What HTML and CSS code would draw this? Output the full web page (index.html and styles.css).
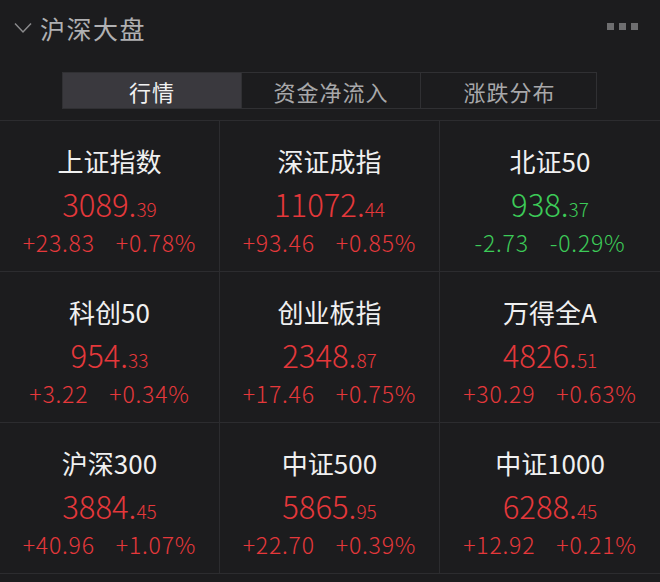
FILE: index.html
```html
<!DOCTYPE html>
<html lang="zh-CN">
<head>
<meta charset="utf-8">
<link rel="stylesheet" href="styles.css">
</head>
<body>
<div class="panel">
  <header class="head">
    <div class="title-wrap">
      <svg class="chev" width="18" height="12" viewBox="0 0 18 12"><path d="M1 1.5 L9 10 L17 1.5" fill="none" stroke="#8a8a8c" stroke-width="1.5"/></svg>
      <span class="title">沪深大盘</span>
    </div>
    <div class="dots"><i></i><i></i><i></i></div>
  </header>
  <nav class="tabs">
    <div class="tab active">行情</div>
    <div class="tab">资金净流入</div>
    <div class="tab">涨跌分布</div>
  </nav>
  <section class="grid">
    <div class="cell"><div class="name">上证指数</div><div class="price up"><span class="int">3089.</span><span class="dec">39</span></div><div class="chg up"><span>+23.83</span><span>+0.78%</span></div></div>
    <div class="cell"><div class="name">深证成指</div><div class="price up"><span class="int">11072.</span><span class="dec">44</span></div><div class="chg up"><span>+93.46</span><span>+0.85%</span></div></div>
    <div class="cell"><div class="name">北证50</div><div class="price down"><span class="int">938.</span><span class="dec">37</span></div><div class="chg down"><span>-2.73</span><span>-0.29%</span></div></div>
    <div class="cell"><div class="name">科创50</div><div class="price up"><span class="int">954.</span><span class="dec">33</span></div><div class="chg up"><span>+3.22</span><span>+0.34%</span></div></div>
    <div class="cell"><div class="name">创业板指</div><div class="price up"><span class="int">2348.</span><span class="dec">87</span></div><div class="chg up"><span>+17.46</span><span>+0.75%</span></div></div>
    <div class="cell"><div class="name">万得全A</div><div class="price up"><span class="int">4826.</span><span class="dec">51</span></div><div class="chg up"><span>+30.29</span><span>+0.63%</span></div></div>
    <div class="cell"><div class="name">沪深300</div><div class="price up"><span class="int">3884.</span><span class="dec">45</span></div><div class="chg up"><span>+40.96</span><span>+1.07%</span></div></div>
    <div class="cell"><div class="name">中证500</div><div class="price up"><span class="int">5865.</span><span class="dec">95</span></div><div class="chg up"><span>+22.70</span><span>+0.39%</span></div></div>
    <div class="cell"><div class="name">中证1000</div><div class="price up"><span class="int">6288.</span><span class="dec">45</span></div><div class="chg up"><span>+12.92</span><span>+0.21%</span></div></div>
  </section>
</div>
</body>
</html>
```

FILE: styles.css
```css
* { box-sizing: border-box; }
html, body { margin: 0; padding: 0; }
body {
  background: #1c1c1e;
  font-family: "Noto Sans CJK SC", "Noto Sans", sans-serif;
  font-weight: 400;
  width: 660px;
  height: 582px;
  overflow: hidden;
}
.panel { width: 660px; }
.head {
  height: 56px;
  display: flex;
  align-items: center;
  justify-content: space-between;
  padding: 0 22px 0 14px;
}
.title-wrap { display: flex; align-items: center; gap: 8px; }
.chev { display: block; }
.title {
  font-size: 25px;
  line-height: 32px;
  color: #b0b0b2;
  letter-spacing: 1.5px;
}
.dots { display: flex; gap: 5px; margin-top: -4px; }
.dots i { display: block; width: 7px; height: 7px; background: #6e6e70; }
.tabs {
  margin: 16px 0 0 62px;
  width: 535px;
  height: 37px;
  display: grid;
  grid-template-columns: 178px 179px 178px;
  border: 1px solid #303033;
}
.tab {
  display: flex;
  align-items: center;
  justify-content: center;
  font-size: 22px;
  color: #a8a8aa;
  border-left: 1px solid #303033;
  letter-spacing: 1px;
}
.tab:first-child { border-left: none; }
.tab.active { background: #3a393e; color: #f2f2f2; }
.grid {
  margin-top: 11px;
  display: grid;
  grid-template-columns: 220px 220px 220px;
  grid-auto-rows: 151px;
  border-top: 1px solid #2c2c2f;
}
.cell {
  border-right: 1px solid #2c2c2f;
  border-bottom: 1px solid #2c2c2f;
  display: flex;
  flex-direction: column;
  align-items: center;
  padding-top: 23px;
}
.cell:nth-child(3n) { border-right: none; }
.name {
  font-size: 26px;
  line-height: 34px;
  color: #f0f0f0;
}
.price {
  margin-top: 6px;
  line-height: 40px;
  height: 40px;
  font-weight: 300;
}
.price .int { font-size: 31px; }
.price .dec { font-size: 19px; }
.chg {
  margin-top: 4px;
  display: flex;
  gap: 21px;
  font-size: 23px;
  letter-spacing: 0.8px;
  line-height: 28px;
  font-weight: 300;
}
.up { color: #e5383b; }
.down { color: #3ccb58; }
```
